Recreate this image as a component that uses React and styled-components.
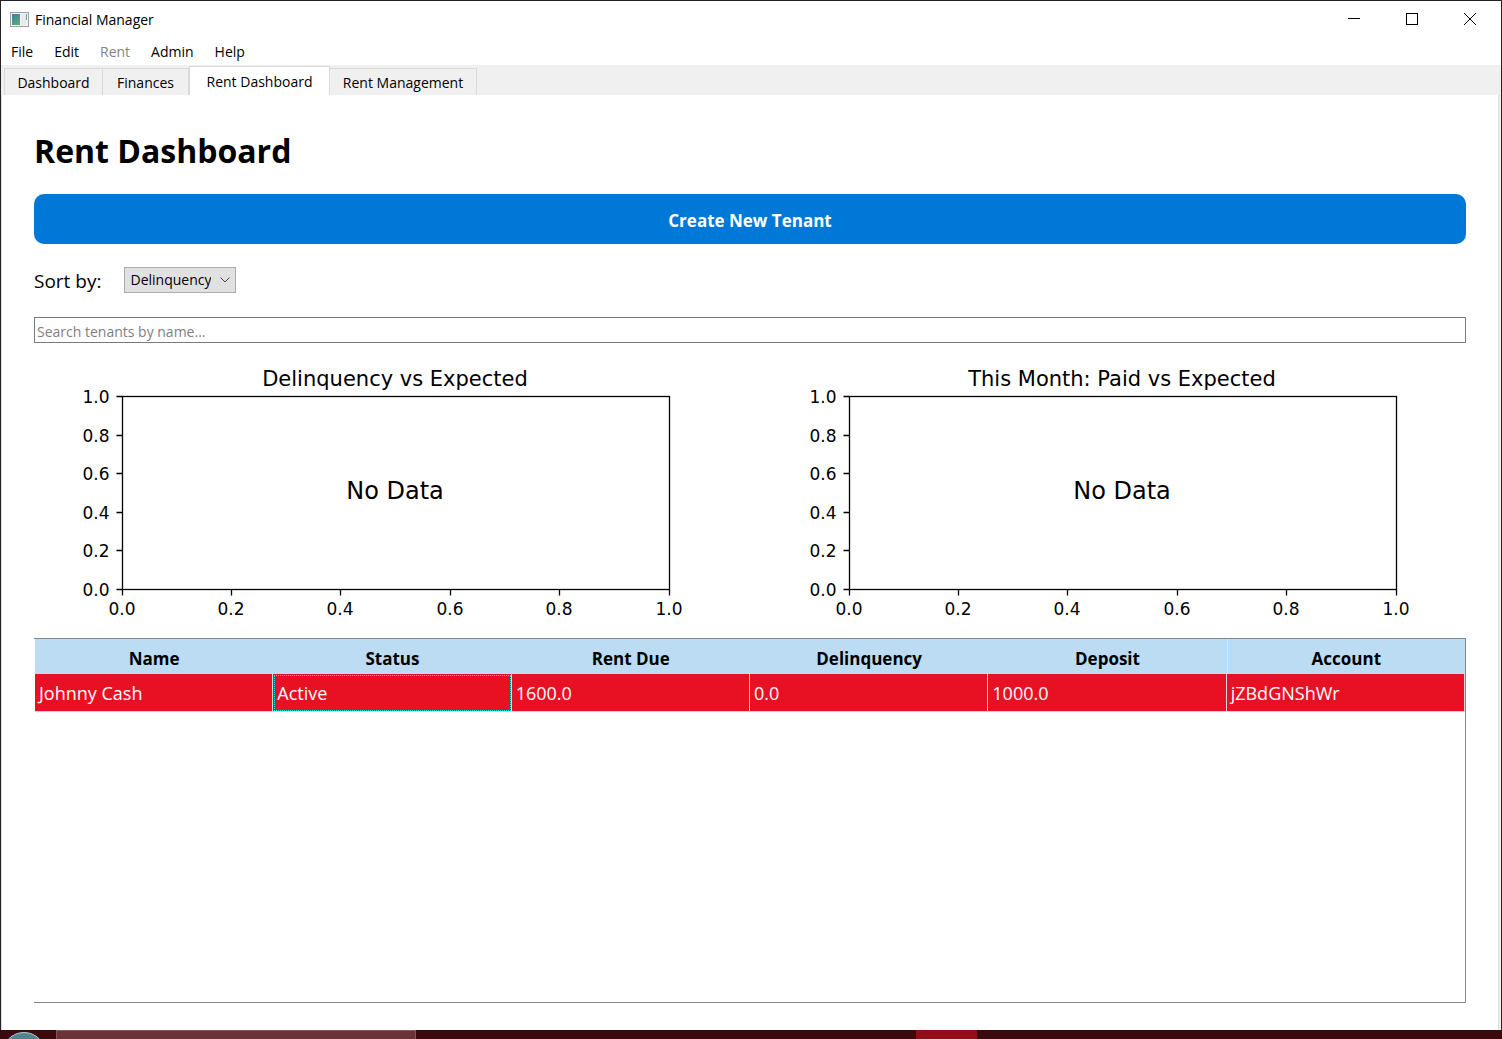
import React, { useState } from "react";
import styled, { createGlobalStyle, css } from "styled-components";

const GlobalStyle = createGlobalStyle`
  *, *::before, *::after { box-sizing: border-box; }
  body {
    margin: 0;
    background: #ffffff;
    color: #000000;
    font-family: "Open Sans", "Noto Sans", sans-serif;
    font-size: 14px;
    line-height: 20px;
  }
  button, input, select { font: inherit; color: inherit; margin: 0; }
`;

const Desktop = styled.div`
  display: flex;
  flex-direction: column;
  min-height: 100vh;
`;

const AppWindow = styled.div`
  flex: 1;
  display: flex;
  flex-direction: column;
  border: 1px solid #232323;
  border-bottom: 0;
`;

const TitleBar = styled.header`
  display: flex;
  align-items: center;
  height: 36px;
  padding: 0 2px 0 9px;
`;

const AppName = styled.span`
  flex: 1;
  margin-left: 6px;
  padding-top: 2px;
`;

const WindowButton = styled.button`
  display: grid;
  place-items: center;
  width: 58px;
  height: 36px;
  padding: 0;
  border: 0;
  background: transparent;
`;

const MenuBar = styled.nav`
  display: flex;
  gap: 1px;
  height: 28px;
`;

const MenuButton = styled.button`
  padding: 2px 10px 0;
  border: 0;
  background: transparent;
  &:disabled { color: #838383; }
`;

const TabBar = styled.div`
  display: flex;
  align-items: flex-end;
  height: 30px;
  padding-left: 3px;
  background: #f0f0f0;
`;

const Tab = styled.button`
  width: ${(p) => p.$width}px;
  height: 27px;
  padding: 2px 0 0;
  border: 1px solid #d9d9d9;
  border-width: 1px 1px 0 0;
  background: #f0f0f0;
  white-space: nowrap;
  &:first-child { border-left-width: 1px; }
  ${(p) =>
    p.$active &&
    css`
      height: 29px;
      border-left-width: 1px;
      background: #ffffff;
    `}
`;

const Pane = styled.main`
  flex: 1;
  display: flex;
  flex-direction: column;
  gap: 20px;
  margin-right: 2px;
  padding: 32px 32px 27px;
  border: solid #dcdcdc;
  border-width: 0 1px;
  box-shadow: 2px 0 #f0f0f0;
`;

const Heading = styled.h1`
  margin: 0;
  font-size: 32px;
  line-height: 47px;
`;

const CreateButton = styled.button`
  height: 50px;
  padding: 3px 0 0;
  border: 0;
  border-radius: 10px;
  background: #0078d7;
  color: #ffffff;
  font-size: 17px;
  font-weight: 700;
`;

const SortRow = styled.div`
  display: flex;
  align-items: flex-start;
  gap: 23px;
  height: 33px;
  padding-top: 3px;
`;

const SortLabel = styled.label`
  font-size: 19px;
  line-height: 28px;
`;

const SelectBox = styled.div`
  position: relative;
  width: 112px;
  height: 26px;
  svg {
    position: absolute;
    top: 10px;
    right: 6px;
    pointer-events: none;
  }
`;

const Select = styled.select`
  appearance: none;
  width: 100%;
  height: 100%;
  padding: 0 24px 0 5px;
  border: 1px solid #adadad;
  border-radius: 0;
  background: #e1e1e1;
`;

const SearchInput = styled.input`
  width: 100%;
  height: 26px;
  padding: 2px 2px 0;
  border: 1px solid #7a7a7a;
  border-radius: 0;
  &::placeholder { color: #808080; opacity: 1; }
`;

const Charts = styled.div`
  display: grid;
  grid-template-columns: 1fr 1fr;
  gap: 22px;
`;

const ChartSvg = styled.svg`
  display: block;
  width: 100%;
  height: auto;
  font-family: "DejaVu Sans", sans-serif;
`;

const TableFrame = styled.section`
  flex: 1;
  padding-left: 1px;
  border: solid #828790;
  border-width: 1px 1px 1px 0;
`;

const Table = styled.table`
  width: 100%;
  table-layout: fixed;
  border-collapse: separate;
  border-spacing: 0;
  line-height: 24px;
`;

const HeadCell = styled.th`
  height: 35px;
  padding: 4px 0 0;
  background: #bcdcf4;
  font-size: 17px;
  &:last-child { border-left: 1px solid #e5e5e5; }
`;

const Cell = styled.td`
  height: 38px;
  padding: 0 4px;
  border: solid #d8d8d8;
  border-width: 0 1px 1px 0;
  background: #e81123;
  background-clip: padding-box;
  color: #ffffff;
  font-size: 18px;
  outline: ${(p) => (p.$focused ? "1px dotted #17eedc" : "none")};
  outline-offset: -2px;
`;

const Taskbar = styled.footer`
  display: flex;
  height: 9px;
  overflow: hidden;
  background: #3a0a0e;
`;

const StartOrb = styled.div`
  width: 44px;
  height: 44px;
  margin: 2px 10px 0 2px;
  border: 1px solid #b9cdd2;
  border-radius: 50%;
  background: #4f8590;
  flex: none;
`;

const TaskItem = styled.div`
  width: 360px;
  border: 1px solid #8b565a;
  border-bottom: 0;
  background: #6b3237;
`;

const TaskAlert = styled.div`
  width: 61px;
  margin-left: 500px;
  background: #910e18;
`;

const menus = ["File", "Edit", "Rent", "Admin", "Help"];
const tabs = [
  { label: "Dashboard", width: 99 },
  { label: "Finances", width: 86 },
  { label: "Rent Dashboard", width: 141 },
  { label: "Rent Management", width: 147 },
];
const columns = ["Name", "Status", "Rent Due", "Delinquency", "Deposit", "Account"];
const tenants = [["Johnny Cash", "Active", "1600.0", "0.0", "1000.0", "jZBdGNShWr"]];
const ticks = [0, 0.2, 0.4, 0.6, 0.8, 1];

function AppIcon() {
  return (
    <svg width="19" height="16" viewBox="0 0 19 16" aria-hidden="true">
      <defs>
        <linearGradient id="screen" x1="0" y1="0" x2="0.5" y2="1">
          <stop offset="0" stopColor="#467ba4" />
          <stop offset="1" stopColor="#58a77b" />
        </linearGradient>
      </defs>
      <rect x="0.5" y="1.5" width="18" height="14" fill="#f4f5f6" stroke="#9ba0a5" />
      <rect x="2" y="3" width="8" height="11" fill="url(#screen)" />
      <rect x="11" y="3" width="5" height="11" fill="#e6eaed" />
      <rect x="16" y="3" width="1" height="6" fill="#62a99a" />
    </svg>
  );
}

function Chart({ title }) {
  const left = 88.5;
  const top = 33.5;
  const width = 547;
  const height = 193;
  const bottom = top + height;
  return (
    <ChartSvg viewBox="0 0 705 255" role="img" aria-label={title}>
      <text x="361" y="23" fontSize="21" textAnchor="middle">{title}</text>
      <rect x={left} y={top} width={width} height={height} fill="none" stroke="#000" strokeWidth="1.3" />
      {ticks.map((t) => {
        const x = Math.floor(t * width) + left;
        const y = bottom - Math.round(t * height);
        return (
          <g key={t} fontSize="17">
            <path d={`M${x} ${bottom}v6M${left} ${y}h-6`} stroke="#000" strokeWidth="1.3" />
            <text x={x - 0.5} y={bottom + 25.5} textAnchor="middle">{t.toFixed(1)}</text>
            <text x={left - 13} y={y + 6.5} textAnchor="end">{t.toFixed(1)}</text>
          </g>
        );
      })}
      <text x="361" y="136" fontSize="24" textAnchor="middle">No Data</text>
    </ChartSvg>
  );
}

export default function App() {
  const [active, setActive] = useState("Rent Dashboard");
  return (
    <Desktop>
      <GlobalStyle />
      <AppWindow>
        <TitleBar>
          <AppIcon />
          <AppName>Financial Manager</AppName>
          <WindowButton aria-label="Minimize">
            <svg width="12" height="12"><path d="M0 5.5h12" stroke="#000" /></svg>
          </WindowButton>
          <WindowButton aria-label="Maximize">
            <svg width="12" height="12"><rect x="0.5" y="0.5" width="11" height="11" fill="none" stroke="#000" /></svg>
          </WindowButton>
          <WindowButton aria-label="Close">
            <svg width="12" height="12"><path d="M0 0l12 12M12 0L0 12" stroke="#000" /></svg>
          </WindowButton>
        </TitleBar>
        <MenuBar>
          {menus.map((m) => (
            <MenuButton key={m} disabled={m === "Rent"}>{m}</MenuButton>
          ))}
        </MenuBar>
        <TabBar role="tablist">
          {tabs.map((t) => (
            <Tab
              key={t.label}
              role="tab"
              aria-selected={t.label === active}
              $active={t.label === active}
              $width={t.width}
              onClick={() => setActive(t.label)}
            >
              {t.label}
            </Tab>
          ))}
        </TabBar>
        <Pane>
          <Heading>Rent Dashboard</Heading>
          <CreateButton>Create New Tenant</CreateButton>
          <SortRow>
            <SortLabel htmlFor="sort">Sort by:</SortLabel>
            <SelectBox>
              <Select id="sort" defaultValue="Delinquency">
                <option>Delinquency</option>
                <option>Name</option>
              </Select>
              <svg width="10" height="6" aria-hidden="true">
                <path d="M0.5 0.5L5 5l4.500-4.500" fill="none" stroke="#444" />
              </svg>
            </SelectBox>
          </SortRow>
          <SearchInput type="text" aria-label="Search tenants" placeholder="Search tenants by name..." />
          <Charts>
            <Chart title="Delinquency vs Expected" />
            <Chart title="This Month: Paid vs Expected" />
          </Charts>
          <TableFrame>
            <Table>
              <thead>
                <tr>{columns.map((c) => <HeadCell key={c} scope="col">{c}</HeadCell>)}</tr>
              </thead>
              <tbody>
                {tenants.map((row) => (
                  <tr key={row[5]}>
                    {row.map((value, i) => (
                      <Cell key={columns[i]} $focused={i === 1}>{value}</Cell>
                    ))}
                  </tr>
                ))}
              </tbody>
            </Table>
          </TableFrame>
        </Pane>
      </AppWindow>
      <Taskbar>
        <StartOrb />
        <TaskItem />
        <TaskAlert />
      </Taskbar>
    </Desktop>
  );
}
